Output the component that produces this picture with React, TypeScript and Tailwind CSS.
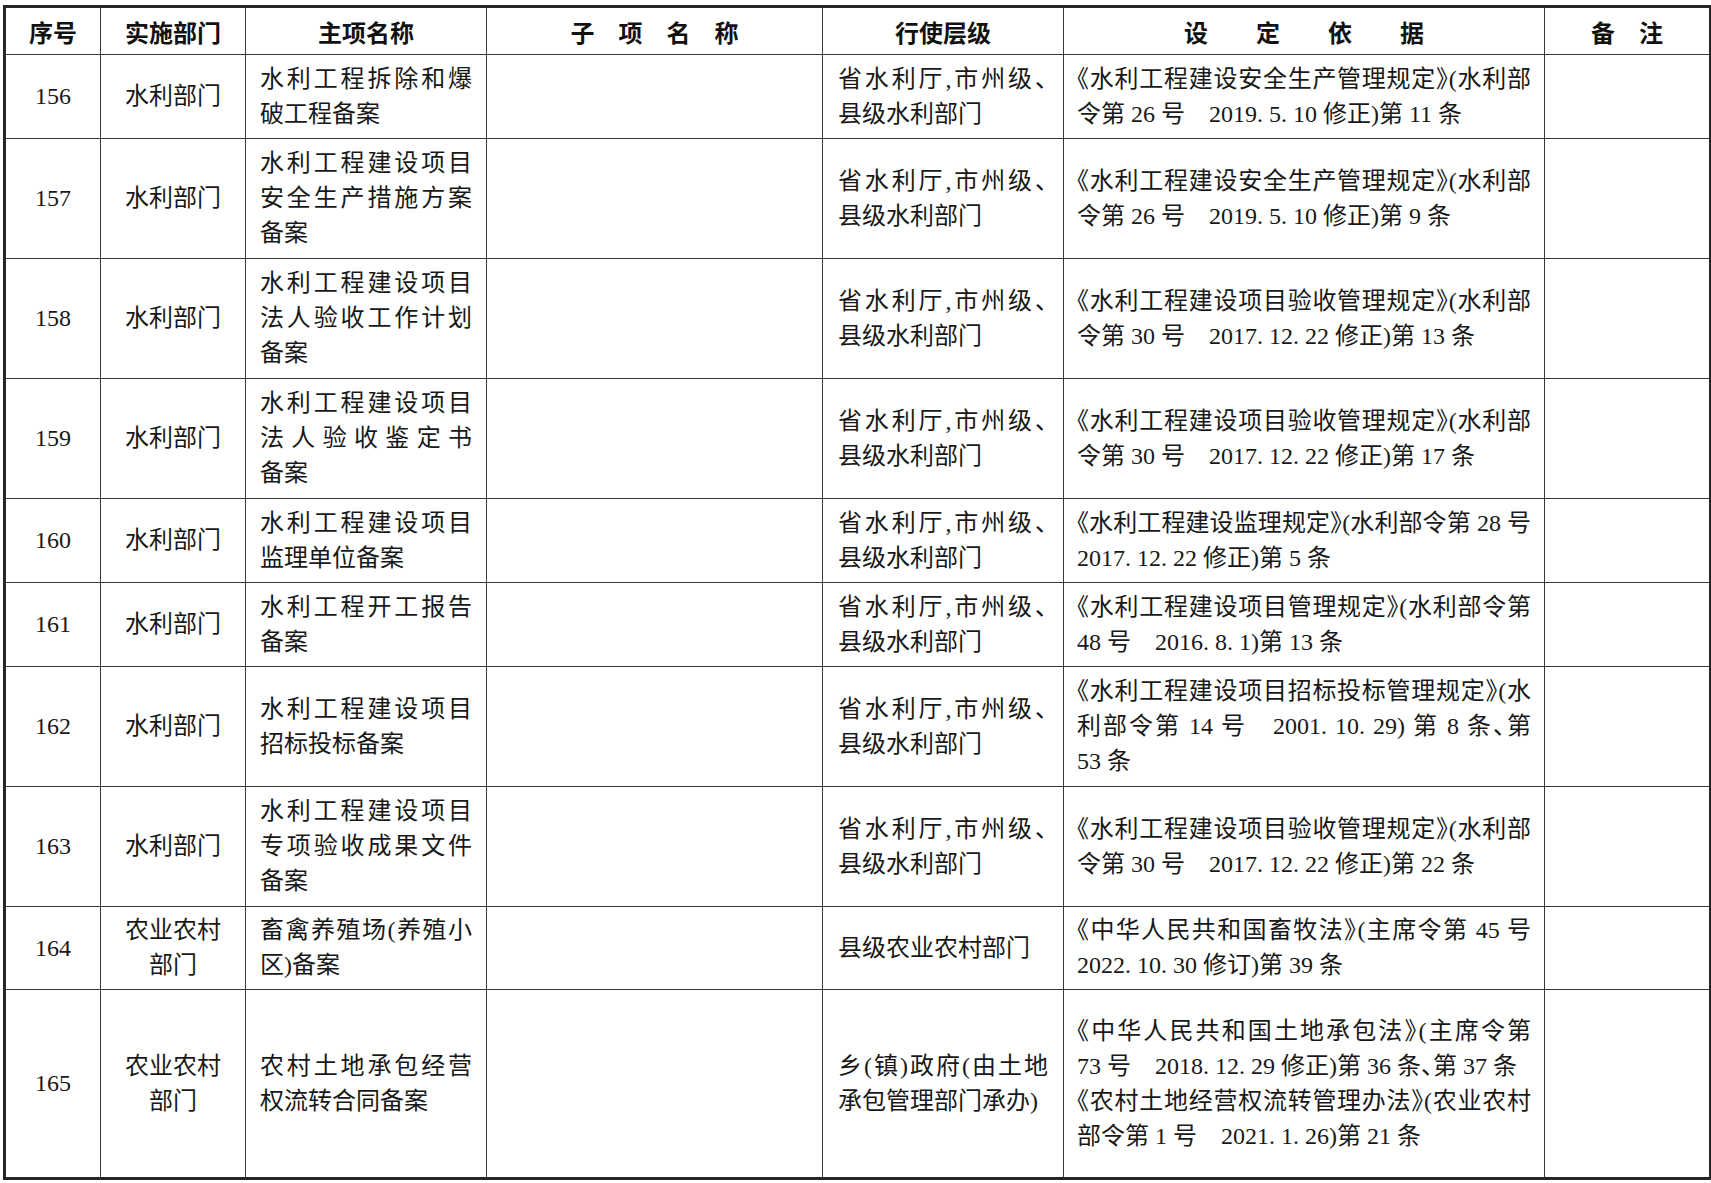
type Row = {
  no: string;
  dept: string[];
  main: string[][];
  level: string[][];
  basis: string[][];
  h: number;
};

const WATER = "水利部门";
const LEVEL = [["省水利厅,市州级、", "县级水利部门"]];

const rows: Row[] = [
  {
    no: "156",
    dept: [WATER],
    main: [["水利工程拆除和爆", "破工程备案"]],
    level: LEVEL,
    basis: [["《水利工程建设安全生产管理规定》(水利部", "令第 26 号　2019. 5. 10 修正)第 11 条"]],
    h: 84,
  },
  {
    no: "157",
    dept: [WATER],
    main: [["水利工程建设项目", "安全生产措施方案", "备案"]],
    level: LEVEL,
    basis: [["《水利工程建设安全生产管理规定》(水利部", "令第 26 号　2019. 5. 10 修正)第 9 条"]],
    h: 120,
  },
  {
    no: "158",
    dept: [WATER],
    main: [["水利工程建设项目", "法人验收工作计划", "备案"]],
    level: LEVEL,
    basis: [["《水利工程建设项目验收管理规定》(水利部", "令第 30 号　2017. 12. 22 修正)第 13 条"]],
    h: 120,
  },
  {
    no: "159",
    dept: [WATER],
    main: [["水利工程建设项目", "法人验收鉴定书", "备案"]],
    level: LEVEL,
    basis: [["《水利工程建设项目验收管理规定》(水利部", "令第 30 号　2017. 12. 22 修正)第 17 条"]],
    h: 120,
  },
  {
    no: "160",
    dept: [WATER],
    main: [["水利工程建设项目", "监理单位备案"]],
    level: LEVEL,
    basis: [["《水利工程建设监理规定》(水利部令第 28 号", "2017. 12. 22 修正)第 5 条"]],
    h: 84,
  },
  {
    no: "161",
    dept: [WATER],
    main: [["水利工程开工报告", "备案"]],
    level: LEVEL,
    basis: [["《水利工程建设项目管理规定》(水利部令第", "48 号　2016. 8. 1)第 13 条"]],
    h: 84,
  },
  {
    no: "162",
    dept: [WATER],
    main: [["水利工程建设项目", "招标投标备案"]],
    level: LEVEL,
    basis: [
      [
        "《水利工程建设项目招标投标管理规定》(水",
        "利部令第 14 号　2001. 10. 29) 第 8 条、第",
        "53 条",
      ],
    ],
    h: 120,
  },
  {
    no: "163",
    dept: [WATER],
    main: [["水利工程建设项目", "专项验收成果文件", "备案"]],
    level: LEVEL,
    basis: [["《水利工程建设项目验收管理规定》(水利部", "令第 30 号　2017. 12. 22 修正)第 22 条"]],
    h: 120,
  },
  {
    no: "164",
    dept: ["农业农村", "部门"],
    main: [["畜禽养殖场(养殖小", "区)备案"]],
    level: [["县级农业农村部门"]],
    basis: [["《中华人民共和国畜牧法》(主席令第 45 号", "2022. 10. 30 修订)第 39 条"]],
    h: 83,
  },
  {
    no: "165",
    dept: ["农业农村", "部门"],
    main: [["农村土地承包经营", "权流转合同备案"]],
    level: [["乡(镇)政府(由土地", "承包管理部门承办)"]],
    basis: [
      ["《中华人民共和国土地承包法》(主席令第", "73 号　2018. 12. 29 修正)第 36 条、第 37 条"],
      ["《农村土地经营权流转管理办法》(农业农村", "部令第 1 号　2021. 1. 26)第 21 条"],
    ],
    h: 189,
  },
];

// book-title marks are set half width in the source
function Text({ line }: { line: string }) {
  const parts = line.split(/([《》、])/);
  return (
    <>
      {parts.map((s, i) =>
        s === "《" || s === "》" || s === "、" ? (
          <span key={i} className="[font-feature-settings:'halt']">
            {s}
          </span>
        ) : (
          s
        )
      )}
    </>
  );
}

// each paragraph: every line but the last is spread edge to edge
function Lines({ paras, half }: { paras: string[][]; half?: boolean }) {
  return (
    <>
      {paras.map((lines, p) =>
        lines.map((line, i) => {
          const full = i < lines.length - 1;
          let cls = full
            ? "whitespace-pre text-justify [text-align-last:justify]"
            : "whitespace-pre text-left";
          if (full && line.endsWith("、")) cls += " mr-[-11px]";
          return (
            <div key={p + "-" + i} className={cls}>
              {half ? <Text line={line} /> : line}
            </div>
          );
        })
      )}
    </>
  );
}

const cell = "border border-[#3a3a3a] align-middle p-0";

export default function App() {
  return (
    <div className="w-[1711px] h-[1183px] bg-white pl-[3px] pt-[5px] text-[#181818]">
      <table className="table-fixed border-collapse border-[3px] border-[#262626] w-[1706px] text-[24px] leading-[35px] [text-autospace:no-autospace] font-['Liberation_Serif','Noto_Sans_CJK_SC',serif]">
        <colgroup>
          <col className="w-[96px]" />
          <col className="w-[145px]" />
          <col className="w-[241px]" />
          <col className="w-[336px]" />
          <col className="w-[241px]" />
          <col className="w-[481px]" />
          <col className="w-[166px]" />
        </colgroup>
        <thead>
          <tr className="h-[48px] font-['Noto_Sans_CJK_SC',sans-serif] font-bold text-center text-[#111]">
            <th className={cell}>序号</th>
            <th className={cell}>实施部门</th>
            <th className={cell}>主项名称</th>
            <th className={cell + " whitespace-pre"}>子　项　名　称</th>
            <th className={cell}>行使层级</th>
            <th className={cell + " whitespace-pre"}>设　　定　　依　　据</th>
            <th className={cell + " whitespace-pre"}>备　注</th>
          </tr>
        </thead>
        <tbody>
          {rows.map((r) => (
            <tr key={r.no} style={{ height: r.h }}>
              <td className={cell + " text-center"}>{r.no}</td>
              <td className={cell + " text-center"}>
                {r.dept.map((d) => (
                  <div key={d}>{d}</div>
                ))}
              </td>
              <td className={cell + " px-[14px]"}>
                <Lines paras={r.main} />
              </td>
              <td className={cell}></td>
              <td className={cell + " px-[15px]"}>
                <Lines paras={r.level} />
              </td>
              <td className={cell + " px-[13px]"}>
                <Lines paras={r.basis} half />
              </td>
              <td className={cell}></td>
            </tr>
          ))}
        </tbody>
      </table>
    </div>
  );
}
